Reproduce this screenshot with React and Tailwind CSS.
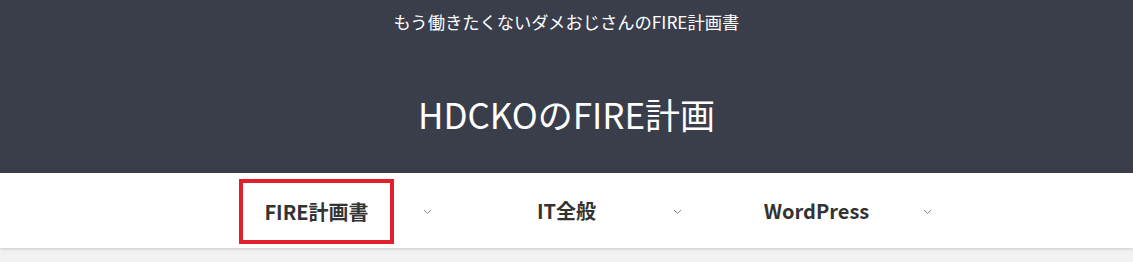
export default function App() {
  const items = ["FIRE計画書", "IT全般", "WordPress"];
  return (
    <div className="min-h-[262px] bg-[#f2f2f2]">
      <div className="font-['Noto_Sans_CJK_JP',sans-serif]">
        <header className="h-[173px] bg-[#3a3e4b] flex flex-col items-center text-white">
          <p className="mt-[10px] text-[17.3px] leading-[24px]">もう働きたくないダメおじさんのFIRE計画書</p>
          <h1 className="mt-[56px] text-[35px] leading-[48px]">HDCKOのFIRE計画</h1>
        </header>
        <nav className="h-[75px] bg-white shadow-[0_1px_3px_rgba(0,0,0,0.18)] flex justify-center">
          {items.map((t, i) => (
            <div key={t} className="relative w-[250px] flex items-center justify-center">
              <span className={"text-[20px] leading-[29px] font-bold text-[#333] " + (i === 0 ? "border-[4px] border-[#e2202c] px-[21px] py-[14px] mt-[2px]" : "")}>{t}</span>
              <svg className="absolute right-[10px] top-[36px]" width="9" height="6" viewBox="0 0 9 6">
                <path d="M1 1l3.5 3.5L8 1" fill="none" stroke="#888" strokeWidth="1" />
              </svg>
            </div>
          ))}
        </nav>
      </div>
    </div>
  );
}
